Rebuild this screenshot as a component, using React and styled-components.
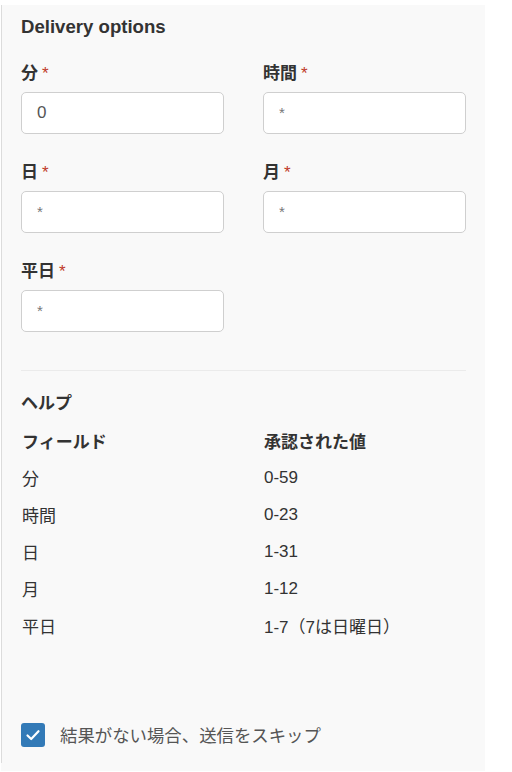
import React from "react";
import styled, { createGlobalStyle } from "styled-components";

const Global = createGlobalStyle`
  html, body { margin: 0; padding: 0; background: #fff; }
  body {
    font-family: "Liberation Sans", "Noto Sans CJK JP", sans-serif;
    color: #333;
    font-size: 17px;
  }
  * { box-sizing: border-box; }
`;

const Shell = styled.div`
  margin: 5px 0 0 1px;
  width: 484px;
  background: #f9f9f9;
  padding-bottom: 8px;
`;

const Body = styled.div`
  border-left: 1px solid #dcdcdc;
  padding: 12px 19px 16px 19px;
  display: flex;
  flex-direction: column;
`;

const Title = styled.h2`
  margin: 0;
  font-size: 18.6px;
  line-height: 20px;
  font-weight: bold;
  color: #333;
`;

const FieldGrid = styled.div`
  display: grid;
  grid-template-columns: 203px 203px;
  column-gap: 39px;
  row-gap: 24px;
  margin-top: 22px;
`;

const Field = styled.div`
  display: flex;
  flex-direction: column;
  gap: 6px;
`;

const Label = styled.label`
  font-size: 17px;
  line-height: 24px;
  padding-top: 3px;
  font-weight: bold;
  color: #333;
`;

const Req = styled.span`
  color: #c0392b;
  font-weight: normal;
  margin-left: 4px;
`;

const Input = styled.input`
  height: 42px;
  width: 100%;
  border: 1px solid #cfcfcf;
  border-radius: 5px;
  background: #fff;
  padding: 0 15px;
  font-family: inherit;
  font-size: 17px;
  color: #555;
  outline: none;
  &::placeholder { color: #777; font-size: 15px; }
`;

const Divider = styled.hr`
  border: 0;
  border-top: 1px solid #ebebeb;
  margin: 38px 0 0 0;
  height: 0;
`;

const HelpTitle = styled.h3`
  margin: 21px 0 0 0;
  font-size: 17px;
  line-height: 24px;
  font-weight: bold;
  color: #333;
`;

const Table = styled.div`
  display: grid;
  grid-template-columns: 242px 1fr;
  margin-top: 6px;
`;

const Cell = styled.div`
  height: 37px;
  display: flex;
  align-items: center;
  font-size: 17px;
  font-weight: ${(p) => (p.$head ? "bold" : "normal")};
  color: #333;
  padding-left: 1px;
`;

const CheckRow = styled.label`
  display: flex;
  align-items: center;
  gap: 15px;
  margin-top: 78px;
  font-size: 17.4px;
  color: #555;
`;

const Box = styled.span`
  width: 24px;
  height: 24px;
  border-radius: 3px;
  background: #337ab7;
  display: flex;
  align-items: center;
  justify-content: center;
  flex: none;
`;

const fields = [
  { label: "分", value: "0" },
  { label: "時間" },
  { label: "日" },
  { label: "月" },
  { label: "平日" },
];

const rows = [
  ["分", "0-59"],
  ["時間", "0-23"],
  ["日", "1-31"],
  ["月", "1-12"],
  ["平日", "1-7（7は日曜日）"],
];

export default function App() {
  return (
    <>
      <Global />
      <Shell>
        <Body>
          <Title>Delivery options</Title>
          <FieldGrid>
            {fields.map((f) => (
              <Field key={f.label}>
                <Label>
                  {f.label}
                  <Req>*</Req>
                </Label>
                <Input defaultValue={f.value} placeholder="*" />
              </Field>
            ))}
          </FieldGrid>
          <Divider />
          <HelpTitle>ヘルプ</HelpTitle>
          <Table>
            <Cell $head>フィールド</Cell>
            <Cell $head>承認された値</Cell>
            {rows.map(([a, b]) => (
              <React.Fragment key={a}>
                <Cell>{a}</Cell>
                <Cell>{b}</Cell>
              </React.Fragment>
            ))}
          </Table>
          <CheckRow>
            <Box>
              <svg width="16" height="16" viewBox="0 0 16 16">
                <polyline
                  points="2.5,8.5 6.2,12 13.5,4.2"
                  fill="none"
                  stroke="#fff"
                  strokeWidth="2.2"
                  strokeLinecap="round"
                  strokeLinejoin="round"
                />
              </svg>
            </Box>
            結果がない場合、送信をスキップ
          </CheckRow>
        </Body>
      </Shell>
    </>
  );
}
